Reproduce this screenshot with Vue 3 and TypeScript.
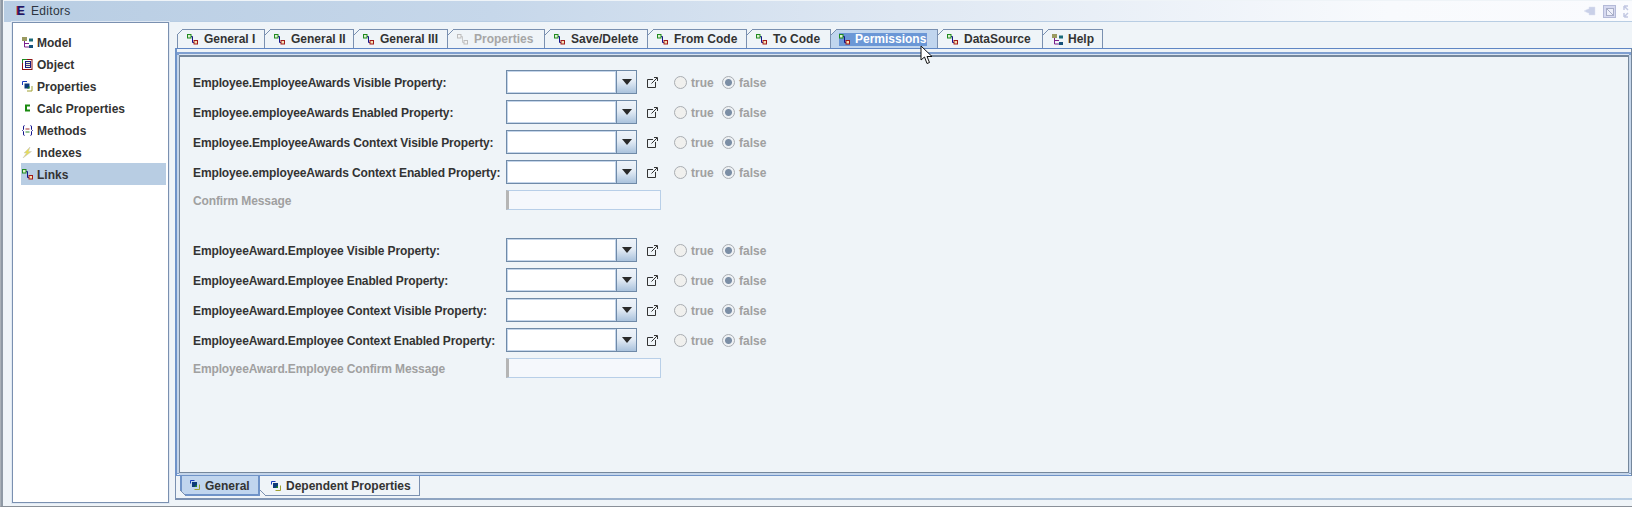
<script setup lang="ts">
interface Tab { label: string; width: number; icon: string; disabled?: boolean; active?: boolean }
interface Row { label: string; disabled?: boolean; field?: boolean }

const navItems = [
  { label: 'Model', icon: 'i-tree' },
  { label: 'Object', icon: 'i-object' },
  { label: 'Properties', icon: 'i-props' },
  { label: 'Calc Properties', icon: 'i-calc' },
  { label: 'Methods', icon: 'i-methods' },
  { label: 'Indexes', icon: 'i-index' },
  { label: 'Links', icon: 'i-link', selected: true },
];

const tabs: Tab[] = [
  { label: 'General I', width: 88, icon: 'i-link' },
  { label: 'General II', width: 89, icon: 'i-link' },
  { label: 'General III', width: 94, icon: 'i-link' },
  { label: 'Properties', width: 97, icon: 'i-link-off', disabled: true },
  { label: 'Save/Delete', width: 103, icon: 'i-link' },
  { label: 'From Code', width: 99, icon: 'i-link' },
  { label: 'To Code', width: 84, icon: 'i-link' },
  { label: 'Permissions', width: 107, icon: 'i-link', active: true },
  { label: 'DataSource', width: 105, icon: 'i-link' },
  { label: 'Help', width: 60, icon: 'i-tree' },
];

const groups: Row[][] = [
  [
    { label: 'Employee.EmployeeAwards Visible Property:' },
    { label: 'Employee.employeeAwards Enabled Property:' },
    { label: 'Employee.EmployeeAwards Context Visible Property:' },
    { label: 'Employee.employeeAwards Context Enabled Property:' },
    { label: 'Confirm Message', disabled: true, field: true },
  ],
  [
    { label: 'EmployeeAward.Employee Visible Property:' },
    { label: 'EmployeeAward.Employee Enabled Property:' },
    { label: 'EmployeeAward.Employee Context Visible Property:' },
    { label: 'EmployeeAward.Employee Context Enabled Property:' },
    { label: 'EmployeeAward.Employee Confirm Message', disabled: true, field: true },
  ],
];

const bottomTabs = [
  { label: 'General', active: true },
  { label: 'Dependent Properties', active: false },
];
</script>

<template>
  <div class="app">
    <svg class="defs" width="0" height="0">
      <symbol id="i-link" viewBox="0 0 11 11">
        <path d="M4 2.5H5.5V8.5H7" fill="none" stroke="#14148c" />
        <rect x="0.5" y="0.5" width="3.5" height="3.5" fill="#dff0d0" stroke="#1f8a1f" />
        <rect x="7" y="6.5" width="3.5" height="3.5" fill="#f6e0b0" stroke="#a01818" />
      </symbol>
      <symbol id="i-link-off" viewBox="0 0 11 11">
        <path d="M4 2.5H5.5V8.5H7" fill="none" stroke="#c8c8c8" />
        <rect x="0.5" y="0.5" width="3.5" height="3.5" fill="#f4f4f4" stroke="#bdbdbd" />
        <rect x="7" y="6.5" width="3.5" height="3.5" fill="#f4f4f4" stroke="#bdbdbd" />
      </symbol>
      <symbol id="i-tree" viewBox="0 0 11 11">
        <path d="M2.5 4V10H7M2.5 6.5H7" fill="none" stroke="#7a1f8c" />
        <rect x="0" y="0" width="5" height="4" fill="#9a9a60" />
        <rect x="7" y="1.5" width="4" height="3" fill="#1a6a7a" />
        <rect x="7" y="8" width="4" height="3" fill="#14507a" />
      </symbol>
      <symbol id="i-object" viewBox="0 0 11 11">
        <rect x="0.5" y="0.5" width="9.5" height="10" fill="#fff" stroke="#8c1414" />
        <path d="M0 0.5H5M0.5 0V4" stroke="#1f8a1f" />
        <rect x="3.5" y="2.5" width="5" height="6" fill="#f4f2c8" stroke="#1c1c80" />
        <path d="M4 4.5H8M4 6.5H8" stroke="#3a3a90" />
      </symbol>
      <symbol id="i-props" viewBox="0 0 11 11">
        <path d="M0.5 4V0.5H5" fill="none" stroke="#1a3fc0" />
        <rect x="2.5" y="2.5" width="5" height="5" fill="#0c3a7a" />
        <path d="M5 7.5L7.5 5V7.5Z" fill="#1f8a1f" />
        <path d="M10 5V10H5" fill="none" stroke="#a0a030" />
      </symbol>
      <symbol id="i-calc" viewBox="0 0 11 11">
        <path d="M8 2.5H4V7.5H8" fill="none" stroke="#1a8a10" stroke-width="2" />
      </symbol>
      <symbol id="i-methods" viewBox="0 0 11 11">
        <path d="M2.5 0.5Q1.5 0.5 1.5 2V4.5L0.5 5.5L1.5 6.5V9Q1.5 10.5 2.5 10.5M8.5 0.5Q9.5 0.5 9.5 2V4.5L10.5 5.5L9.5 6.5V9Q9.5 10.5 8.5 10.5" fill="none" stroke="#14148c" />
        <path d="M3.5 4H7.5" stroke="#a03030" />
        <path d="M3.5 7H7.5" stroke="#2a8a2a" />
      </symbol>
      <symbol id="i-index" viewBox="0 0 11 11">
        <path d="M8 0L2 6H4.5L1 11L9.5 4.5H6.5L8 0Z" fill="#e6dc5a" stroke="#c4c4c4" stroke-width="0.5" />
      </symbol>
      <symbol id="i-general" viewBox="0 0 10 10">
        <path d="M0.5 3.5V0.5H4.5" fill="none" stroke="#1a3fc0" />
        <rect x="2" y="2" width="5" height="5" fill="#0c3a7a" />
        <path d="M4.5 7L7 4.5V7Z" fill="#1f8a1f" />
        <path d="M9.5 4.5V9.5H4.5" fill="none" stroke="#a0a030" />
      </symbol>
    </svg>

    <header class="titlebar">
      <span class="title-e">E</span>
      <span class="title-text">Editors</span>
      <span class="win-btns">
        <svg width="12" height="10" viewBox="0 0 12 10">
          <path d="M0 5L4 3H5V1H11V9H5V7H4Z" fill="#c9d0e8" stroke="#dfe3f0" stroke-width="0.5" />
        </svg>
        <svg width="13" height="13" viewBox="0 0 13 13">
          <rect x="0.5" y="0.5" width="12" height="12" fill="#d6d9f0" stroke="#b4bad8" />
          <rect x="3.5" y="3.5" width="7" height="7" fill="#eef0fa" stroke="#a8aec8" />
          <path d="M4 4L10 10" stroke="#a8aec8" />
        </svg>
        <svg width="9" height="13" viewBox="0 0 9 13">
          <path d="M1 1H5M1 1V5M1 1L5 5M1 12H5M1 12V8M1 12L5 8" fill="none" stroke="#c2c8e2" stroke-width="1.5" />
        </svg>
      </span>
    </header>

    <div class="body">
      <nav class="nav">
        <div v-for="item in navItems" :key="item.label" class="nav-item" :class="{ selected: item.selected }">
          <svg class="icon"><use :href="'#' + item.icon" /></svg>
          <span class="nav-text">{{ item.label }}</span>
        </div>
      </nav>

      <section class="editor">
        <div class="tabs">
          <div
            v-for="tab in tabs"
            :key="tab.label"
            class="tab"
            :class="{ disabled: tab.disabled, active: tab.active }"
            :style="{ width: tab.width + 'px' }"
          >
            <span class="tab-inner">
              <svg class="icon"><use :href="'#' + tab.icon" /></svg>
              <span>{{ tab.label }}</span>
            </span>
          </div>
          <svg class="cursor" width="14" height="20" viewBox="0 0 14 20">
            <path d="M1 1V15L4.5 12L7 18.5L9.5 17.5L7 11.5H12Z" fill="#fff" stroke="#111" stroke-width="1" stroke-linejoin="round" />
          </svg>
        </div>

        <div class="pane">
          <div class="frame">
            <div class="pane-inner">
              <div v-for="(group, g) in groups" :key="g" class="group">
                <div v-for="row in group" :key="row.label" class="row" :class="{ 'field-row': row.field }">
                  <label class="label" :class="{ disabled: row.disabled }">{{ row.label }}</label>
                  <div v-if="row.field" class="field"></div>
                  <template v-else>
                    <div class="combo">
                      <div class="combo-input"></div>
                      <div class="combo-btn"><i class="arrow"></i></div>
                    </div>
                    <svg class="popup" width="11" height="11" viewBox="0 0 11 11">
                      <path d="M6 2.5H0.5V10.5H8.5V5" fill="none" stroke="#333" />
                      <path d="M4.5 6.5L10 1M7 0.5H10.5V4" fill="none" stroke="#333" />
                    </svg>
                    <span class="radio"></span>
                    <span class="radio-text">true</span>
                    <span class="radio on"></span>
                    <span class="radio-text">false</span>
                  </template>
                </div>
              </div>
            </div>
          </div>
          <div class="bottom-tabs">
            <div v-for="tab in bottomTabs" :key="tab.label" class="bottom-tab" :class="{ active: tab.active }">
              <svg class="icon-small"><use href="#i-general" /></svg>
              <span class="bottom-text">{{ tab.label }}</span>
            </div>
          </div>
          <div class="pane-base"></div>
        </div>
      </section>
    </div>
  </div>
</template>

<style>
html, body { margin: 0; overflow: hidden; }
</style>

<style scoped>
.app {
  box-sizing: border-box;
  width: 1632px;
  height: 507px;
  padding-left: 3px;
  background: #eff4f8;
  border-left: 1px solid #a9b0b8;
  border-bottom: 1px solid #8a9098;
  box-shadow: inset 2px 0 0 #8f99a5;
  font-family: "Liberation Sans", Arial, sans-serif;
  font-size: 12px;
  font-weight: bold;
  color: #333;
  display: flex;
  flex-direction: column;
  overflow: hidden;
}
.defs { position: absolute; }
.icon { width: 11px; height: 11px; flex: none; }
.icon-small { width: 10px; height: 10px; flex: none; }

.titlebar {
  height: 21px;
  margin-top: 1px;
  flex: none;
  box-sizing: border-box;
  display: flex;
  align-items: center;
  padding-left: 13px;
  background: linear-gradient(90deg, #b8cde3 0%, #c6d7ea 30%, #dfe8f3 55%, #f8fafd 85%, #fafbfe 100%);
  border-bottom: 1px solid #b8cde3;
}
.title-e {
  width: 7px;
  height: 11px;
  margin-right: 7px;
  line-height: 11px;
  color: #1a1a6a;
  text-shadow: -1px 0 0 #a01818;
}
.title-text { font-weight: normal; color: #2c3440; letter-spacing: 0.3px; }
.win-btns {
  margin-left: auto;
  display: flex;
  align-items: center;
  gap: 7px;
}

.body { flex: 1; display: flex; padding-left: 8px; min-height: 0; }

.nav {
  box-sizing: border-box;
  width: 157px;
  height: 481px;
  padding: 8px 2px 0 8px;
  background: #fff;
  border: 1px solid #7a90b0;
  box-shadow: 0 0 0 1px #dfe8f3;
  flex: none;
}
.nav-item {
  height: 22px;
  display: flex;
  align-items: center;
  gap: 4px;
  padding-left: 1px;
  color: #333;
}
.nav-text { padding-top: 1px; }
.nav-item.selected { background: #b8cde3; }

.editor { margin-left: 6px; flex: 1; display: flex; flex-direction: column; min-width: 0; }

.tabs {
  position: relative;
  height: 26px;
  padding: 7px 0 0 2px;
  box-sizing: border-box;
  display: flex;
  flex: none;
}
.tab {
  position: relative;
  box-sizing: border-box;
  height: 19px;
  padding-left: 9px;
  display: flex;
  align-items: center;
  border-top: 1px solid #7a90b0;
  border-right: 1px solid #7a90b0;
}
.tab:first-child { border-left: 1px solid #7a90b0; }
.tab::before {
  content: '';
  position: absolute;
  left: 0;
  top: -1px;
  width: 6px;
  height: 6px;
  background: linear-gradient(135deg, #eff4f8 0 44%, #7a90b0 44% 58%, transparent 58%);
}
.tab:first-child::before { left: -1px; }
.tab-inner { display: flex; align-items: center; gap: 6px; height: 13px; }
.tab.disabled { color: #a6a6a6; }
.tab.active { background: #c0d5ee; color: #fff; }
.tab.active .tab-inner { background: #6b97d6; padding-right: 1px; margin-left: -1px; gap: 5px; }
.tab:last-of-type .tab-inner { gap: 5px; }
.cursor { position: absolute; left: 745px; top: 23px; z-index: 3; }

.pane {
  box-sizing: border-box;
  width: 1457px;
  height: 452px;
  border-left: 1px solid #7a90b0;
  display: flex;
  flex-direction: column;
}
.frame {
  box-sizing: border-box;
  height: 428px;
  padding: 6px 0 0 2px;
  margin-left: -1px;
  border-top: 1px solid #5f86c4;
  border-left: 2px solid #6f93c8;
  border-right: 1px solid #75879c;
  border-bottom: 1px solid #6f93c8;
}
.pane-inner {
  box-sizing: border-box;
  height: 418px;
  width: 1450px;
  border: 1px solid #75879c;
  border-top-width: 2px;
  box-shadow:
    0 -1px 0 #d9e4f2,
    -2px 0 0 #c4d5ea,
    2px 0 0 #c4d5ea,
    0 2px 0 #c4d5ea,
    0 -1px 0 2px #7f9fd0;
  padding: 13px 0 0 13px;
  display: flex;
  flex-direction: column;
  gap: 28px;
}
.group { display: flex; flex-direction: column; gap: 6px; }
.row { height: 24px; display: flex; align-items: center; }
.field-row { height: 20px; }
.label {
  width: 313px;
  flex: none;
  white-space: nowrap;
  letter-spacing: -0.12px;
  padding-top: 1px;
}
.label.disabled { color: #a0a0a0; }

.combo {
  box-sizing: border-box;
  width: 131px;
  height: 24px;
  display: flex;
  border: 1px solid #6f8aa8;
  background: #fff;
}
.combo-input { flex: 1; border-right: 1px solid #6f8aa8; box-shadow: inset 0 0 0 1px #c4d5ea; }
.combo-btn {
  width: 19px;
  display: flex;
  align-items: center;
  justify-content: center;
  background: linear-gradient(#eef3f9, #e4ecf5 45%, #a9c2dc);
}
.arrow {
  width: 0;
  height: 0;
  border-left: 5px solid transparent;
  border-right: 5px solid transparent;
  border-top: 6px solid #2a2a2a;
}
.popup { margin-left: 10px; margin-right: 16px; flex: none; }
.radio {
  box-sizing: border-box;
  width: 13px;
  height: 13px;
  flex: none;
  border-radius: 50%;
  border: 1px solid #a9adb2;
  background: #f0f0ee;
  margin-right: 4px;
}
.radio.on {
  background: radial-gradient(circle, #7b8ea5 0 3px, #eef1f4 4px);
}
.radio-text { color: #a0a0a0; margin-right: 4px; width: 27px; padding-top: 1px; }
.field {
  box-sizing: border-box;
  width: 155px;
  height: 20px;
  background: #f5f8fc;
  border: 1px solid #b8cfe8;
  border-left: 3px solid #b5b5b5;
}

.bottom-tabs {
  height: 20px;
  padding-left: 4px;
  display: flex;
  flex: none;
}
.bottom-tab {
  position: relative;
  box-sizing: border-box;
  height: 20px;
  display: flex;
  align-items: center;
  gap: 5px;
  border-right: 1px solid #7a90b0;
  border-bottom: 1px solid #7a90b0;
}
.bottom-text { padding-top: 1px; }
.bottom-tab::before {
  content: '';
  position: absolute;
  left: 0;
  bottom: -1px;
  width: 6px;
  height: 6px;
  background: linear-gradient(45deg, #eff4f8 0 44%, #7a90b0 44% 58%, transparent 58%);
}
.bottom-tab.active {
  width: 80px;
  padding-left: 8px;
  background: #c0d5ee;
  border: 2px solid #6f93c8;
  border-top: none;
}
.bottom-tab.active::before { left: -2px; bottom: -2px; }
.bottom-tab:not(.active) { width: 160px; padding-left: 11px; }
.pane-base {
  height: 2px;
  margin-top: 2px;
  background: linear-gradient(90deg, #7a90b0 0%, #a8bdd6 40%, #b8cde3 100%);
}
</style>
